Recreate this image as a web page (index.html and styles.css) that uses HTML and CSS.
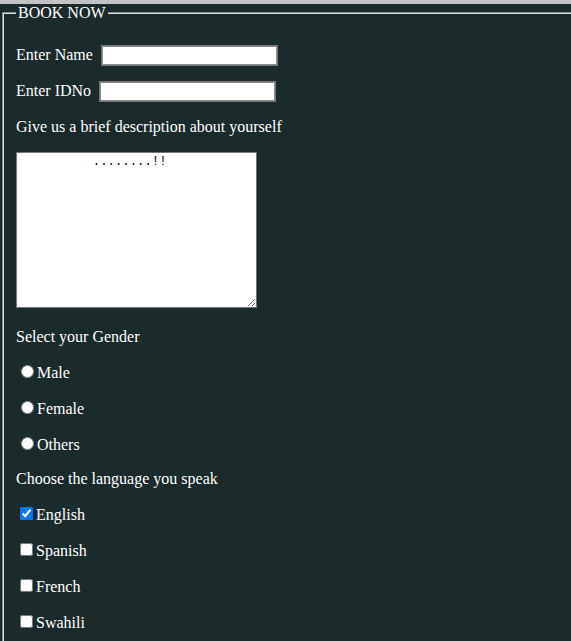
FILE: index.html
```html
<!DOCTYPE html>
<html>
<head>
<meta charset="utf-8">
<link rel="stylesheet" href="styles.css">
</head>
<body>
<div class="topbar"></div>
<form class="form">
<fieldset class="box">
<legend class="legend">BOOK NOW</legend>
<p class="row"><label class="lbl" for="name">Enter Name</label> <input class="field" id="name" type="text"></p>
<p class="row"><label class="lbl" for="idno">Enter IDNo</label> <input class="field" id="idno" type="text"></p>
<p class="row text desc-title">Give us a brief description about yourself</p>
<p class="row area-row"><textarea class="desc">          ........!!</textarea></p>
<p class="row text group-title">Select your Gender</p>
<p class="row opt"><input class="radio" type="radio" name="g" id="m"><label for="m">Male</label></p>
<p class="row opt"><input class="radio" type="radio" name="g" id="f"><label for="f">Female</label></p>
<p class="row opt"><input class="radio" type="radio" name="g" id="o"><label for="o">Others</label></p>
<p class="row text">Choose the language you speak</p>
<p class="row opt"><input class="check" type="checkbox" id="en" checked><label for="en">English</label></p>
<p class="row opt"><input class="check" type="checkbox" id="es"><label for="es">Spanish</label></p>
<p class="row opt"><input class="check" type="checkbox" id="fr"><label for="fr">French</label></p>
<p class="row opt"><input class="check" type="checkbox" id="sw"><label for="sw">Swahili</label></p>
</fieldset>
</form>
</body>
</html>
```
FILE: styles.css
```css
html {
  overflow: hidden;
}
html, body {
  margin: 0;
  padding: 0;
  background: #1b2a2b;
  color: #ffffff;
  font-family: "Liberation Serif", "Times New Roman", serif;
  font-size: 16px;
}
.topbar {
  height: 4px;
  background: #c3c3c3;
}
.form {
  margin: 0;
}
.box {
  margin: 0 2px;
  width: 700px;
  padding: 7px 12px 10px 12px;
  border: 2px groove #e0e0e0;
}
.legend {
  padding: 0 2px;
  line-height: 18px;
}
.row {
  margin: 16px 0;
  line-height: 20px;
  height: 20px;
}
.text {
  line-height: 18px;
  height: 18px;
}
.desc-title {
  margin-top: 17px;
}
.group-title {
  margin-bottom: 15px;
}
.field {
  width: 177px;
  height: 21px;
  box-sizing: border-box;
  border: 1px solid #767676;
  outline: 1px solid #8a8a8a;
  outline-offset: -2px;
  background: #fff;
  padding: 1px 2px;
  margin: 0 0 0 4px;
  vertical-align: baseline;
}
.area-row {
  height: auto;
  padding-bottom: 4px;
}
.desc {
  width: 241px;
  height: 156px;
  box-sizing: border-box;
  border: 1px solid #767676;
  padding: 2px;
  margin: 0;
  font-family: "Liberation Mono", monospace;
  font-size: 12.3px;
  line-height: 15px;
  color: #000;
  background: #fff;
  display: block;
  resize: both;
}
.radio {
  width: 13px;
  height: 13px;
  margin: 3px 3px 0 5px;
}
.check {
  width: 13px;
  height: 13px;
  margin: 3px 3px 3px 4px;
}
```
